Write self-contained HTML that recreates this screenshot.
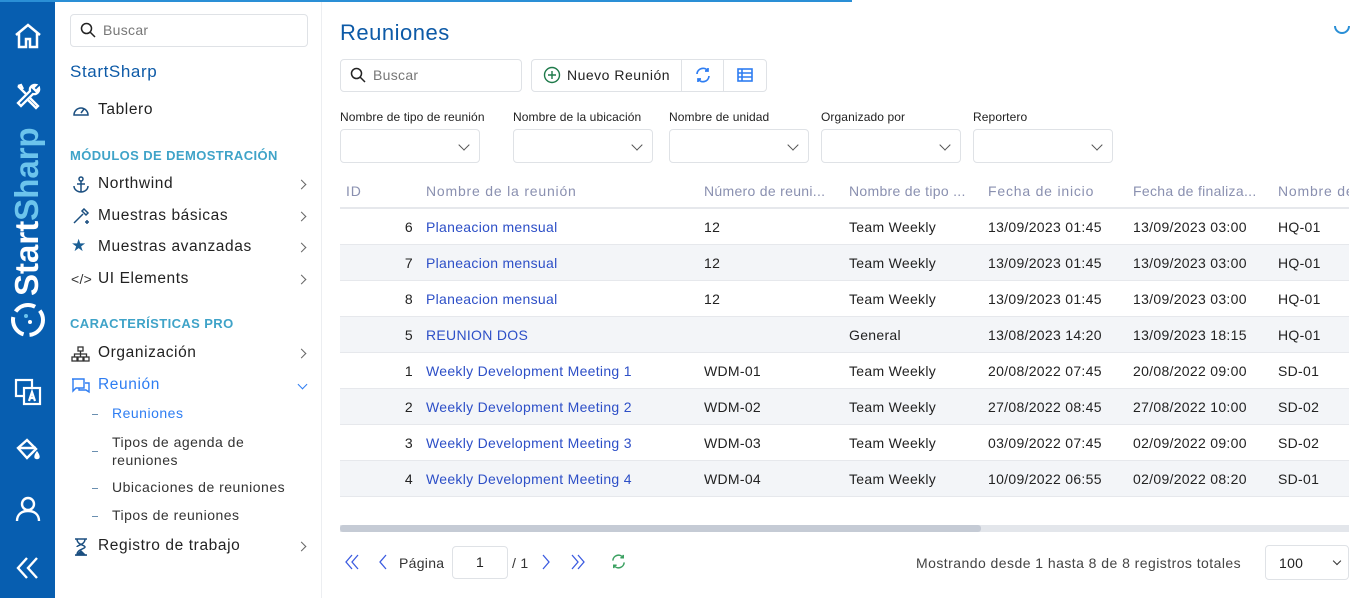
<!DOCTYPE html>
<html><head><meta charset="utf-8"><style>
*{box-sizing:border-box;margin:0;padding:0}
body{width:1366px;height:598px;overflow:hidden;background:#fff;font-family:"Liberation Sans",sans-serif;position:relative;color:#222;letter-spacing:.3px}
.abs{position:absolute}
.rail{left:0;top:0;width:55px;height:598px;background:#075eb0}
.side{left:55px;top:0;width:267px;height:598px;background:#fff;border-right:1px solid #eceef1}
.topbar{left:0;top:0;width:852px;height:2px;background:#2a8fd6}
.inp{border:1px solid #dfe2e6;border-radius:4px;background:#fff}
.mi{position:absolute;left:98px;font-size:15.5px;color:#222;letter-spacing:.6px}
.chev{position:absolute;left:298px;width:7px;height:7px;border-right:1.4px solid #666;border-top:1.4px solid #666;transform:rotate(45deg)}
.sec{position:absolute;left:70px;font-size:13px;font-weight:bold;color:#3fa3c8;letter-spacing:.4px}
.sub{position:absolute;left:112px;font-size:14px;color:#333;letter-spacing:.5px}
.dash{position:absolute;left:92px;width:6px;height:1px;background:#6a8fb0}
.lbl{position:absolute;top:110px;font-size:12px;color:#222;letter-spacing:.1px}
.sel{position:absolute;top:129px;width:140px;height:34px}
.sel:after{content:"";position:absolute;right:11px;top:11px;width:7px;height:7px;border-right:1.3px solid #555;border-bottom:1.3px solid #555;transform:rotate(45deg)}
.th{position:absolute;top:183px;font-size:14px;color:#8a90b0;white-space:nowrap;letter-spacing:.8px}
.row{position:absolute;left:340px;width:1009px;height:36px;border-bottom:1px solid #e6e8ec;font-size:14px}
.row span{position:absolute;top:10px;white-space:nowrap}
.alt{background:#f3f5f8}
a{color:#2d4fc7;text-decoration:none}
</style></head><body>
<div class="abs rail">
<svg class="abs" style="left:13px;top:22px" width="30" height="28" viewBox="0 0 30 28" fill="none" stroke="#fff" stroke-width="2.5"><path d="M3 13 15 3 27 13M6 11v14h7v-8h4v8h7V11"/></svg>
<svg class="abs" style="left:14px;top:82px" width="28" height="28" viewBox="0 0 28 28" fill="none" stroke="#fff" stroke-width="2.3"><path d="M4 4l8 8M4 4l3-1 2 4M16 16l8 8-2 2-8-8M22 3a5 5 0 0 0-6 6L4 21l3 3 12-12a5 5 0 0 0 6-6l-3 3-3-3z"/></svg>
<div class="abs" style="left:8px;top:296px;transform:rotate(-90deg);transform-origin:0 0;font-size:33px;font-weight:bold;color:#fff;white-space:nowrap;width:170px;letter-spacing:0">Start<span style="color:#6cc4ec">Sharp</span></div>
<svg class="abs" style="left:10px;top:302px" width="36" height="36" viewBox="0 0 36 36"><circle cx="18" cy="18" r="15" fill="none" stroke="#fff" stroke-width="4" stroke-dasharray="22 6"/><circle cx="16" cy="14" r="2" fill="#6cc4ec"/><circle cx="20" cy="20" r="2" fill="#fff"/></svg>
<svg class="abs" style="left:14px;top:378px" width="28" height="28" viewBox="0 0 28 28" fill="none" stroke="#fff" stroke-width="2.2"><rect x="2" y="2" width="16" height="16"/><rect x="10" y="10" width="16" height="16" fill="#075eb0"/><path d="M15 23l3-9 3 9M16 20h4"/></svg>
<svg class="abs" style="left:14px;top:436px" width="28" height="28" viewBox="0 0 28 28" fill="none" stroke="#fff" stroke-width="2.4"><path d="M4 12l9-8 9 9-9 9z"/><path d="M4 12h18" /><path d="M23 17c-2 3-2 5 0 5s2-2 0-5z" fill="#fff"/></svg>
<svg class="abs" style="left:15px;top:496px" width="26" height="26" viewBox="0 0 26 26" fill="none" stroke="#fff" stroke-width="2.4"><circle cx="13" cy="8" r="6"/><path d="M2 25c0-7 5-10 11-10s11 3 11 10"/></svg>
<svg class="abs" style="left:15px;top:555px" width="26" height="26" viewBox="0 0 26 26" fill="none" stroke="#fff" stroke-width="2.4"><path d="M12 3 3 13l9 10M22 3l-9 10 9 10"/></svg>
</div>
<div class="abs side"></div>
<div class="abs topbar"></div>
<div class="abs inp" style="left:70px;top:14px;width:238px;height:33px"></div>
<svg class="abs" style="left:80px;top:22px" width="16" height="16" viewBox="0 0 16 16" fill="none" stroke="#222" stroke-width="1.5"><circle cx="6.5" cy="6.5" r="5"/><path d="M10 10l5 5"/></svg>
<div class="abs" style="left:103px;top:22px;font-size:14px;color:#777">Buscar</div>
<div class="abs" style="left:70px;top:62px;font-size:17px;color:#0d5aa7;letter-spacing:.6px">StartSharp</div>
<svg class="abs" style="left:72px;top:102px" width="18" height="16" viewBox="0 0 18 16" fill="none" stroke="#1b4f80" stroke-width="1.5"><path d="M2 13a7 7 0 1 1 14 0z"/><path d="M9 11l3-4"/></svg>
<div class="mi" style="top:101px">Tablero</div>
<div class="sec" style="top:148px">MÓDULOS DE DEMOSTRACIÓN</div>
<svg class="abs" style="left:72px;top:176px" width="18" height="17" viewBox="0 0 18 17" fill="none" stroke="#1b4f80" stroke-width="1.5"><circle cx="9" cy="3" r="2"/><path d="M9 5v11M5 8h8M2 10a7 6 0 0 0 14 0"/></svg>
<div class="mi" style="top:175px">Northwind</div><div class="chev" style="top:181px"></div>
<svg class="abs" style="left:72px;top:208px" width="18" height="17" viewBox="0 0 18 17" fill="none" stroke="#1b4f80" stroke-width="1.5"><path d="M2 15l9-9M10 3l4 4M12 1l4 4-2 2-4-4zM15 12v4M13 14h4"/></svg>
<div class="mi" style="top:207px">Muestras básicas</div><div class="chev" style="top:213px"></div>
<div class="abs" style="left:71px;top:236px;font-size:17px;color:#1b5f95">★</div><div class="mi" style="top:238px">Muestras avanzadas</div><div class="chev" style="top:244px"></div>
<div class="abs" style="left:71px;top:271px;font-size:14px;color:#333">&lt;/&gt;</div><div class="mi" style="top:270px">UI Elements</div><div class="chev" style="top:276px"></div>
<div class="sec" style="top:316px">CARACTERÍSTICAS PRO</div>
<svg class="abs" style="left:71px;top:346px" width="19" height="16" viewBox="0 0 19 16" fill="none" stroke="#333" stroke-width="1.3"><rect x="7" y="1" width="5" height="4"/><rect x="1" y="11" width="5" height="4"/><rect x="7" y="11" width="5" height="4"/><rect x="13" y="11" width="5" height="4"/><path d="M9.5 5v6M3.5 11V8h12v3"/></svg>
<div class="mi" style="top:344px">Organización</div><div class="chev" style="top:350px"></div>
<svg class="abs" style="left:71px;top:378px" width="19" height="16" viewBox="0 0 19 16" fill="none" stroke="#2e7df2" stroke-width="1.4"><path d="M1 1h12v9H5l-3 3V1zM14 5h4v9l-3-2H8v-2"/></svg>
<div class="mi" style="top:376px;color:#2e7df2">Reunión</div>
<div class="abs" style="left:299px;top:381px;width:7px;height:7px;border-right:1.3px solid #2e7df2;border-bottom:1.3px solid #2e7df2;transform:rotate(45deg)"></div>
<div class="dash" style="top:414px"></div><div class="sub" style="top:405px;color:#2e7df2">Reuniones</div>
<div class="dash" style="top:451px"></div><div class="sub" style="top:433px;line-height:18px">Tipos de agenda de<br>reuniones</div>
<div class="dash" style="top:488px"></div><div class="sub" style="top:479px">Ubicaciones de reuniones</div>
<div class="dash" style="top:516px"></div><div class="sub" style="top:507px">Tipos de reuniones</div>
<svg class="abs" style="left:74px;top:538px" width="14" height="18" viewBox="0 0 14 18" fill="none" stroke="#1b4f80" stroke-width="1.5"><path d="M1 1h12M1 17h12M3 1c0 6 8 6 8 8s-8 2-8 8M11 1c0 6-8 6-8 8"/><path d="M3 17l4-4 4 4z" fill="#1b4f80"/></svg>
<div class="mi" style="top:537px">Registro de trabajo</div><div class="chev" style="top:543px"></div>

<div class="abs" style="left:340px;top:20px;font-size:22px;color:#0d5aa7;letter-spacing:.5px">Reuniones</div>
<svg class="abs" style="left:1333px;top:18px" width="18" height="18" viewBox="0 0 18 18" fill="none" stroke="#2a8fd6" stroke-width="2"><path d="M2 8a7 7 0 0 0 14 0"/></svg>
<div class="abs inp" style="left:340px;top:59px;width:182px;height:33px"></div>
<svg class="abs" style="left:350px;top:67px" width="16" height="16" viewBox="0 0 16 16" fill="none" stroke="#222" stroke-width="1.5"><circle cx="6.5" cy="6.5" r="5"/><path d="M10 10l5 5"/></svg>
<div class="abs" style="left:373px;top:67px;font-size:14px;color:#777">Buscar</div>
<div class="abs inp" style="left:531px;top:59px;width:236px;height:33px"></div>
<div class="abs" style="left:681px;top:60px;width:1px;height:31px;background:#dfe2e6"></div>
<div class="abs" style="left:723px;top:60px;width:1px;height:31px;background:#dfe2e6"></div>
<svg class="abs" style="left:543px;top:66px" width="18" height="18" viewBox="0 0 18 18" fill="none" stroke="#1e7a4a" stroke-width="1.4"><circle cx="9" cy="9" r="7.5"/><path d="M9 5v8M5 9h8"/></svg>
<div class="abs" style="left:567px;top:67px;font-size:14px;color:#222;letter-spacing:.5px">Nuevo Reunión</div>
<svg class="abs" style="left:694px;top:66px" width="18" height="18" viewBox="0 0 18 18" fill="none" stroke="#2e7df2" stroke-width="1.7"><path d="M3 8a6 6 0 0 1 11-3M15 10a6 6 0 0 1-11 3M14 2v3h-3M4 16v-3h3"/></svg>
<svg class="abs" style="left:737px;top:68px" width="16" height="14" viewBox="0 0 16 14" fill="none" stroke="#2e7df2" stroke-width="1.6"><rect x="1" y="1" width="14" height="12"/><path d="M1 5h14M1 9h14M5 1v12"/></svg>
<div class="lbl" style="left:340px">Nombre de tipo de reunión</div>
<div class="lbl" style="left:513px">Nombre de la ubicación</div>
<div class="lbl" style="left:669px">Nombre de unidad</div>
<div class="lbl" style="left:821px">Organizado por</div>
<div class="lbl" style="left:973px">Reportero</div>
<div class="sel inp" style="left:340px"></div><div class="sel inp" style="left:513px"></div><div class="sel inp" style="left:669px"></div><div class="sel inp" style="left:821px"></div><div class="sel inp" style="left:973px"></div>
<div class="th" style="left:346px">ID</div>
<div class="th" style="left:426px">Nombre de la reunión</div>
<div class="th" style="left:704px;letter-spacing:.3px">Número de reuni...</div>
<div class="th" style="left:849px;letter-spacing:.3px">Nombre de tipo ...</div>
<div class="th" style="left:988px">Fecha de inicio</div>
<div class="th" style="left:1133px;letter-spacing:.3px">Fecha de finaliza...</div>
<div class="th" style="left:1278px;width:71px;overflow:hidden">Nombre de la</div>
<div class="abs" style="left:340px;top:207px;width:1009px;height:2px;background:#e6e8ec"></div>
<div class="row" style="top:209px"><span style="right:936px">6</span><span style="left:86px"><a>Planeacion mensual</a></span><span style="left:364px">12</span><span style="left:509px">Team Weekly</span><span style="left:648px">13/09/2023 01:45</span><span style="left:793px">13/09/2023 03:00</span><span style="left:938px">HQ-01</span></div>
<div class="row alt" style="top:245px"><span style="right:936px">7</span><span style="left:86px"><a>Planeacion mensual</a></span><span style="left:364px">12</span><span style="left:509px">Team Weekly</span><span style="left:648px">13/09/2023 01:45</span><span style="left:793px">13/09/2023 03:00</span><span style="left:938px">HQ-01</span></div>
<div class="row" style="top:281px"><span style="right:936px">8</span><span style="left:86px"><a>Planeacion mensual</a></span><span style="left:364px">12</span><span style="left:509px">Team Weekly</span><span style="left:648px">13/09/2023 01:45</span><span style="left:793px">13/09/2023 03:00</span><span style="left:938px">HQ-01</span></div>
<div class="row alt" style="top:317px"><span style="right:936px">5</span><span style="left:86px"><a>REUNION DOS</a></span><span style="left:509px">General</span><span style="left:648px">13/08/2023 14:20</span><span style="left:793px">13/09/2023 18:15</span><span style="left:938px">HQ-01</span></div>
<div class="row" style="top:353px"><span style="right:936px">1</span><span style="left:86px"><a>Weekly Development Meeting 1</a></span><span style="left:364px">WDM-01</span><span style="left:509px">Team Weekly</span><span style="left:648px">20/08/2022 07:45</span><span style="left:793px">20/08/2022 09:00</span><span style="left:938px">SD-01</span></div>
<div class="row alt" style="top:389px"><span style="right:936px">2</span><span style="left:86px"><a>Weekly Development Meeting 2</a></span><span style="left:364px">WDM-02</span><span style="left:509px">Team Weekly</span><span style="left:648px">27/08/2022 08:45</span><span style="left:793px">27/08/2022 10:00</span><span style="left:938px">SD-02</span></div>
<div class="row" style="top:425px"><span style="right:936px">3</span><span style="left:86px"><a>Weekly Development Meeting 3</a></span><span style="left:364px">WDM-03</span><span style="left:509px">Team Weekly</span><span style="left:648px">03/09/2022 07:45</span><span style="left:793px">02/09/2022 09:00</span><span style="left:938px">SD-02</span></div>
<div class="row alt" style="top:461px"><span style="right:936px">4</span><span style="left:86px"><a>Weekly Development Meeting 4</a></span><span style="left:364px">WDM-04</span><span style="left:509px">Team Weekly</span><span style="left:648px">10/09/2022 06:55</span><span style="left:793px">02/09/2022 08:20</span><span style="left:938px">SD-01</span></div>
<div class="abs" style="left:340px;top:525px;width:1009px;height:7px;background:#e3e6eb"></div>
<div class="abs" style="left:340px;top:525px;width:641px;height:7px;background:#c5cbd5;border-radius:3px"></div>
<svg class="abs" style="left:344px;top:554px" width="16" height="16" viewBox="0 0 16 16" fill="none" stroke="#3b5be0" stroke-width="1.3"><path d="M8 1 2 8l6 7M14 1 8 8l6 7"/></svg>
<svg class="abs" style="left:378px;top:554px" width="10" height="16" viewBox="0 0 10 16" fill="none" stroke="#3b5be0" stroke-width="1.3"><path d="M8 1 2 8l6 7"/></svg>
<div class="abs" style="left:399px;top:555px;font-size:14px;color:#333">Página</div>
<div class="abs inp" style="left:452px;top:546px;width:56px;height:33px;font-size:14px;text-align:center;line-height:31px">1</div>
<div class="abs" style="left:512px;top:555px;font-size:14px;color:#333">/ 1</div>
<svg class="abs" style="left:541px;top:554px" width="10" height="16" viewBox="0 0 10 16" fill="none" stroke="#3b5be0" stroke-width="1.3"><path d="M2 1l6 7-6 7"/></svg>
<svg class="abs" style="left:570px;top:554px" width="16" height="16" viewBox="0 0 16 16" fill="none" stroke="#3b5be0" stroke-width="1.3"><path d="M2 1l6 7-6 7M8 1l6 7-6 7"/></svg>
<svg class="abs" style="left:610px;top:553px" width="17" height="17" viewBox="0 0 18 18" fill="none" stroke="#3aa060" stroke-width="1.6"><path d="M3 8a6 6 0 0 1 11-3M15 10a6 6 0 0 1-11 3M14 2v3h-3M4 16v-3h3"/></svg>
<div class="abs" style="left:916px;top:555px;font-size:14px;color:#444;letter-spacing:.45px">Mostrando desde 1 hasta 8 de 8 registros totales</div>
<div class="abs inp" style="left:1265px;top:545px;width:84px;height:35px"></div>
<div class="abs" style="left:1279px;top:555px;font-size:14px">100</div>
<div class="abs" style="left:1334px;top:558px;width:6px;height:6px;border-right:1.6px solid #333;border-bottom:1.6px solid #333;transform:rotate(45deg)"></div>
</body></html>
